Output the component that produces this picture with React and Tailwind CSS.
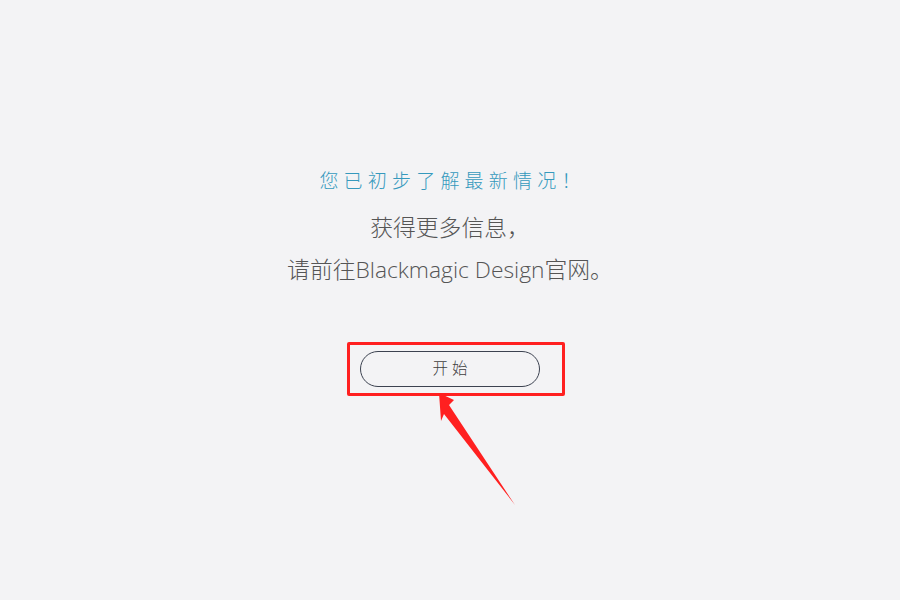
import React from "react";

const App = () => {
  return (
    <div
      className="relative w-[900px] h-[600px] bg-[#f3f3f5] overflow-hidden"
      style={{ fontFamily: '"Open Sans", "Noto Sans CJK SC", sans-serif' }}
    >
      <div className="flex flex-col items-center pt-[168px]">
        <h1 className="text-[19px] leading-[26px] tracking-[5.2px] text-[#3599bd] font-light pl-[5px]">
          您已初步了解最新情况！
        </h1>
        <p className="mt-[13px] text-[22.8px] leading-[42px] text-[#555] font-light text-center">
          获得更多信息，
          <br />
          请前往Blackmagic Design官网。
        </p>

        {/* Button with highlight */}
        <div className="mt-[51px] border-[3px] border-[#ff2020] rounded-[2px] pl-[10px] pr-[22px] py-[6px] ml-[12px]">
          <button className="w-[180px] h-[36px] rounded-full border border-[#3c4250] text-[15.5px] tracking-[4px] text-[#404040] font-light pl-[4px]">
            开始
          </button>
        </div>
      </div>

      {/* Annotation arrow */}
      <svg className="absolute left-0 top-0" width="900" height="600">
        <polygon
          points="439,393 454,400 449,405 515,505 444,414 441,421"
          fill="#ff2020"
        />
      </svg>
    </div>
  );
};

export default App;
